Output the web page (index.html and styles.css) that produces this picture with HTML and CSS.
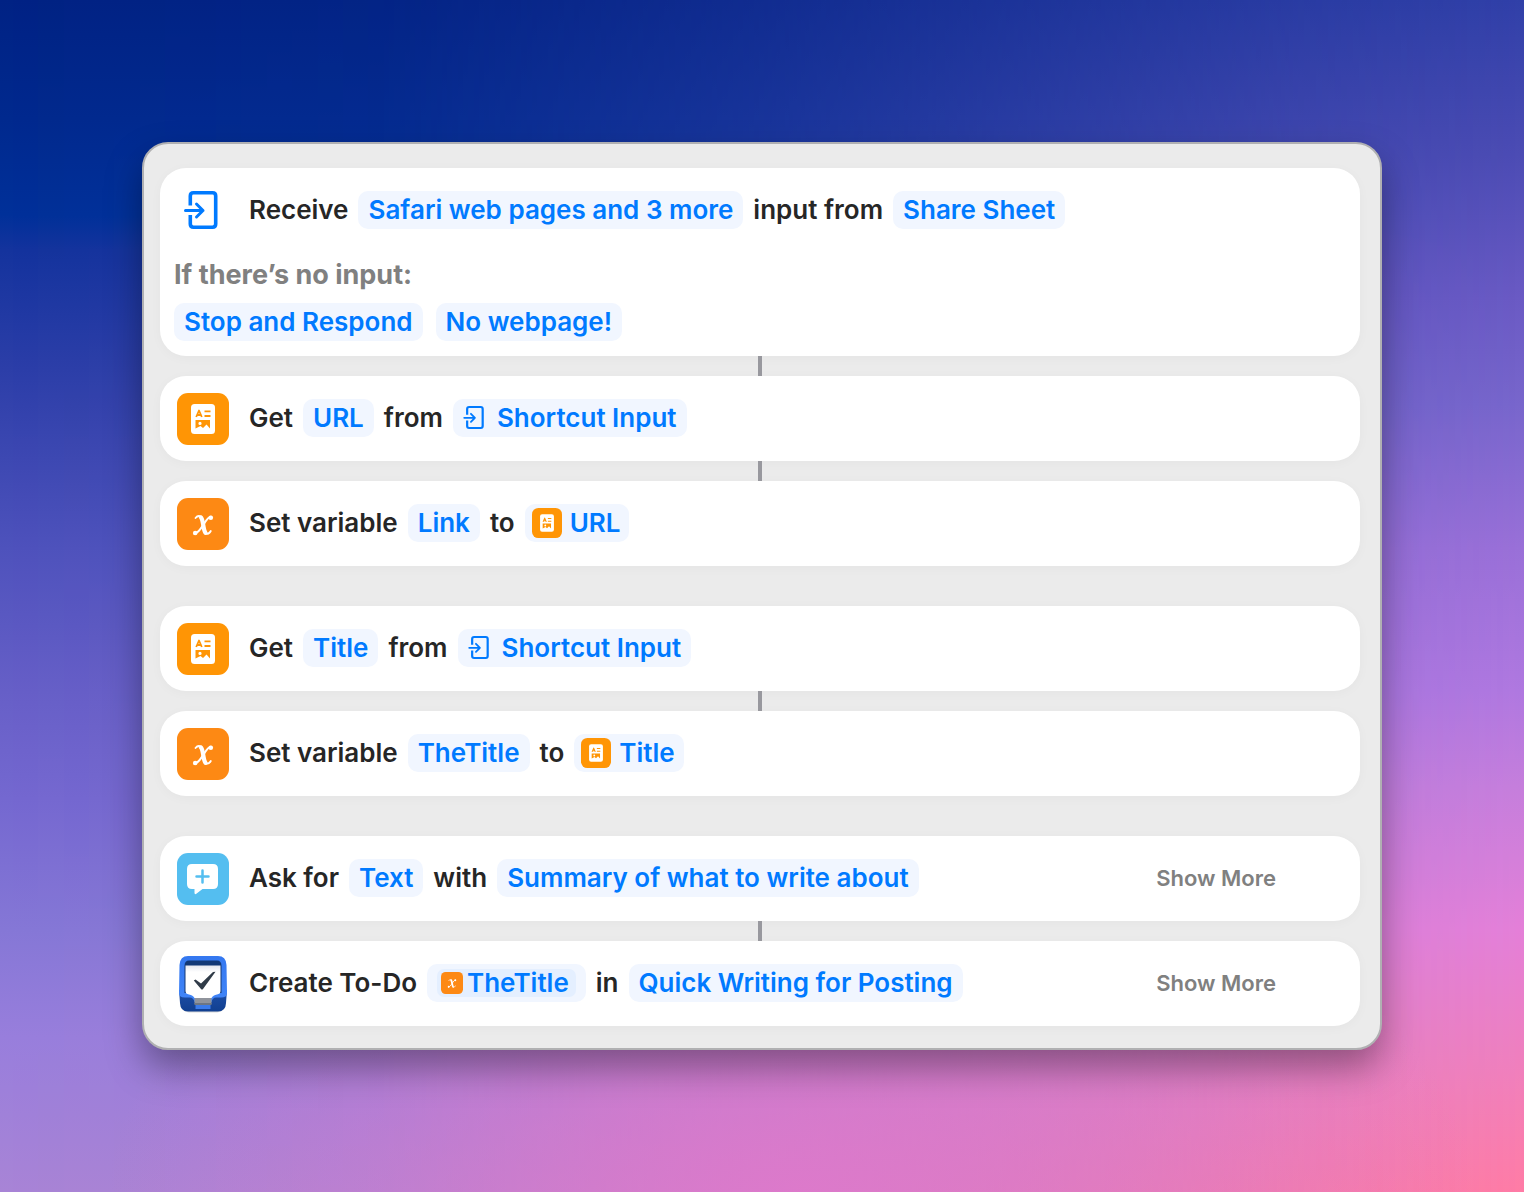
FILE: index.html
```html
<!DOCTYPE html>
<html lang="en">
<head>
<meta charset="utf-8">
<title>Shortcut editor</title>
<link rel="stylesheet" href="styles.css">
</head>
<body>
<svg class="defs" aria-hidden="true">
  <defs>
    <linearGradient id="g-tray" x2="0" y2="1"><stop stop-color="#3478f0"/><stop offset="1" stop-color="#4185f8"/></linearGradient>
    <linearGradient id="g-base" x2="0" y2="1"><stop stop-color="#1e4fa8"/><stop offset="1" stop-color="#113f90"/></linearGradient>
    <linearGradient id="g-page" x2="0" y2="1"><stop stop-color="#e4e6ee"/><stop offset=".2" stop-color="#fff"/></linearGradient>
  </defs>
  <symbol id="i-input" viewBox="0 0 36 40">
    <g fill="none" stroke="currentColor" stroke-linecap="round" stroke-linejoin="round">
      <path stroke-width="3.6" stroke-linecap="butt" d="M6.800 15.500V6Q6.800 2.800 10 2.800H29Q32.200 2.800 32.200 6V34Q32.200 37.200 29 37.200H10Q6.800 37.200 6.800 34V25"/>
      <path stroke-width="3" d="M2 20.500H19.500M13 14L19.500 20.500L13 27"/>
    </g>
  </symbol>
  <symbol id="i-doc" viewBox="0 0 52 52">
    <rect width="52" height="52" rx="11" fill="#ff9505"/>
    <rect x="14" y="11" width="24" height="30" rx="3.500" fill="#fff"/>
    <g fill="none" stroke="#ff9505" stroke-width="1.800">
      <path d="M19.200 24L22 17.500L24.800 24M20 22H24" stroke-linejoin="round"/>
      <path d="M27.500 18.300H33.500M27.500 23H33.500"/>
    </g>
    <path fill="#ff9505" fill-rule="evenodd" d="M18.500 27H33V35.500L29.500 31.500L26 35L23.500 33L18.500 35.500ZM23 28.800A1.600 1.600 0 1 0 23 32A1.600 1.600 0 1 0 23 28.800Z"/>
  </symbol>
  <symbol id="i-var" viewBox="0 0 52 52">
    <rect width="52" height="52" rx="11" fill="#fd8914"/>
    <g fill="none" stroke="#fff" stroke-linecap="round">
      <path stroke-width="4.200" d="M24 19.500C26.500 22 26 32 28.500 34.800"/>
      <path stroke-width="1.800" d="M18.500 20C20 18 22 17.500 24 18.500M28.500 35.800C31.500 36.500 33 34.500 33.800 33"/>
      <path stroke-width="2" d="M34 18.800C29 18 24 35.500 17.500 35.700"/>
    </g>
    <circle cx="33.800" cy="19.700" r="2.300" fill="#fff"/><circle cx="18.200" cy="35" r="2.300" fill="#fff"/>
  </symbol>
  <symbol id="i-ask" viewBox="0 0 52 52">
    <rect width="52" height="52" rx="11" fill="#54bef0"/>
    <path fill="#fff" d="M15 11H36Q41 11 41 16V31Q41 36 36 36H25.500L19 41Q17.500 41.500 17.500 40V36H15Q10 36 10 31V16Q10 11 15 11Z"/>
    <path d="M25.500 17.500V29.500M19.500 23.500H31.500" stroke="#54bef0" stroke-width="2.500" stroke-linecap="round"/>
  </symbol>
  <symbol id="i-todo" viewBox="0 0 52 60">
    <rect x="3" y="4" width="46" height="54.500" rx="9" fill="#000" opacity=".15"/>
    <path fill="url(#g-base)" d="M2 36H50L49 49Q48.500 57.500 41 57.500H11Q3.500 57.500 3 49Z"/>
    <path fill="url(#g-tray)" d="M11 2H41Q49 2 49.500 11L50 39Q50 43.500 44 43.500H39Q35.500 43.500 34.500 48H17.500Q16.500 43.500 13 43.500H8Q2 43.500 2 39L2.500 11Q3 2 11 2Z"/>
    <path fill="#123876" d="M12 6.500H40Q44.500 6.500 44.500 12V39H7.500V12Q7.500 6.500 12 6.500Z"/>
    <path fill="url(#g-page)" d="M8.500 11.500H43.500V37Q43.500 40 40 40.500Q36 41 34.500 44H17.500Q16 41 12 40.500Q8.500 40 8.500 37Z"/>
    <path fill="#90949c" d="M17.500 44H34.500V50H17.500Z"/>
    <path fill="#6d7684" d="M17.500 49H34.500V51H17.500Z"/>
    <path fill="#3b7bea" d="M18.500 51H33.500V55H18.500Z"/>
    <path fill="#303b48" d="M16.800 26.500L18.500 25.500L24 29.500L36 18L38.500 17.800L26 35Q25 36 24 35Z"/>
  </symbol>
</svg>
<main class="window">
  <section class="flow">
    <article class="card card-tall">
      <div class="row">
        <svg class="icon icon-input" aria-hidden="true"><use href="#i-input"/></svg>
        <div class="phrase">
          <span>Receive</span>
          <button type="button" class="pill">Safari web pages and 3 more</button>
          <span>input from</span>
          <button type="button" class="pill">Share Sheet</button>
        </div>
      </div>
      <h2 class="fallback">If there’s no input:</h2>
      <div class="choices">
        <button type="button" class="pill">Stop and Respond</button>
        <button type="button" class="pill">No webpage!</button>
      </div>
    </article>
    <article class="card">
      <svg class="icon" aria-hidden="true"><use href="#i-doc"/></svg>
      <div class="phrase">
        <span>Get</span>
        <button type="button" class="pill">URL</button>
        <span>from</span>
        <button type="button" class="pill"><svg class="glyph" aria-hidden="true"><use href="#i-input"/></svg>Shortcut Input</button>
      </div>
    </article>
    <article class="card">
      <svg class="icon" aria-hidden="true"><use href="#i-var"/></svg>
      <div class="phrase">
        <span>Set variable</span>
        <button type="button" class="pill">Link</button>
        <span>to</span>
        <button type="button" class="pill pill-doc"><svg class="tile" aria-hidden="true"><use href="#i-doc"/></svg>URL</button>
      </div>
    </article>
  </section>
  <section class="flow">
    <article class="card">
      <svg class="icon" aria-hidden="true"><use href="#i-doc"/></svg>
      <div class="phrase">
        <span>Get</span>
        <button type="button" class="pill">Title</button>
        <span>from</span>
        <button type="button" class="pill"><svg class="glyph" aria-hidden="true"><use href="#i-input"/></svg>Shortcut Input</button>
      </div>
    </article>
    <article class="card">
      <svg class="icon" aria-hidden="true"><use href="#i-var"/></svg>
      <div class="phrase">
        <span>Set variable</span>
        <button type="button" class="pill">TheTitle</button>
        <span>to</span>
        <button type="button" class="pill pill-doc"><svg class="tile" aria-hidden="true"><use href="#i-doc"/></svg>Title</button>
      </div>
    </article>
  </section>
  <section class="flow">
    <article class="card">
      <svg class="icon" aria-hidden="true"><use href="#i-ask"/></svg>
      <div class="phrase">
        <span>Ask for</span>
        <button type="button" class="pill">Text</button>
        <span>with</span>
        <button type="button" class="pill">Summary of what to write about</button>
      </div>
      <button type="button" class="more">Show More</button>
    </article>
    <article class="card">
      <svg class="icon icon-todo" aria-hidden="true"><use href="#i-todo"/></svg>
      <div class="phrase">
        <span>Create To-Do</span>
        <button type="button" class="pill"><span class="token"><svg class="mini" aria-hidden="true"><use href="#i-var"/></svg>TheTitle</span></button>
        <span>in</span>
        <button type="button" class="pill">Quick Writing for Posting</button>
      </div>
      <button type="button" class="more">Show More</button>
    </article>
  </section>
</main>
</body>
</html>
```
FILE: styles.css
```css
* { box-sizing: border-box; }
body {
  position: relative;
  margin: 0;
  min-height: 100vh;
  padding: 142px;
  font: 600 26px/38px Inter, "Liberation Sans", sans-serif;
  color: #262626;
  background: linear-gradient(to bottom, #002284 0%, #00298e 10%, #003099 18%, #14339d 21%, #2c3ea8 31%, #4e52bc 46%, #6860c8 59%, #7468d0 67%, #8577d6 78%, #987edc 87%, #a884d6 100%);
}
/* Wallpaper: the warm right-hand side, then the pink glow at the foot */
body::before,
body::after {
  content: "";
  position: absolute;
  inset: 0;
}
body::before {
  background: linear-gradient(to bottom, #3040a8 0%, #4c4cb4 13%, #6a5ac4 25%, #7866cc 34%, #9a70d8 46%, #b078e0 58%, #c67edc 66%, #e480d8 78%, #ee80c0 88%, #ff7ba5 100%);
  mask-image: linear-gradient(to right, transparent 0%, rgba(0, 0, 0, .06) 25%, rgba(0, 0, 0, .34) 50%, rgba(0, 0, 0, .85) 85%, #000 100%);
}
body::after {
  background: radial-gradient(ellipse 45% 30% at 52% 100%, rgba(224, 120, 204, .85), rgba(216, 122, 208, 0));
}
.defs { position: absolute; width: 0; height: 0; }
.window {
  position: relative;
  z-index: 1;
  display: grid;
  gap: 40px;
  padding: 24px 20px 22px 16px;
  border: 2px solid #b0b0b2;
  border-radius: 26px;
  background: #ebebeb;
  box-shadow: 0 18px 36px rgba(0, 0, 0, .36);
}
.flow { display: grid; gap: 20px; }
.card {
  position: relative;
  display: flex;
  align-items: center;
  gap: 20px;
  min-height: 85px;
  padding: 0 84px 2px 17px;
  border-radius: 26px;
  background: #fff;
  box-shadow: 0 2px 12px rgba(0, 0, 0, .03);
}
.card + .card::before {
  content: "";
  position: absolute;
  top: -20px;
  left: calc(50% - 2px);
  width: 4px;
  height: 20px;
  background: #98989e;
}
.card-tall {
  display: block;
  padding: 22px 14px 15px;
}
.row { display: flex; align-items: center; gap: 20px; padding-left: 3px; }
.icon { flex: none; width: 52px; height: 52px; margin-top: 2px; }
.icon-input { height: 40px; margin-top: 0; padding-right: 3px; color: #007aff; }
.icon-todo { height: 60px; }
.phrase { display: flex; align-items: center; gap: 10px; white-space: nowrap; }
button { font: inherit; border: 0; margin: 0; cursor: pointer; }
.pill {
  display: flex;
  align-items: center;
  height: 38px;
  padding: 0 10px;
  border-radius: 10px;
  background: #f1f6ff;
  color: #007aff;
  white-space: nowrap;
}
.fallback { margin: 26px 0 9px; font-size: 27px; font-weight: 700; line-height: 38px; color: #808080; }
.choices { display: flex; gap: 13px; }
.glyph { width: 22px; height: 25px; margin-right: 12px; }
.pill-doc { padding: 0 9px 0 7px; }
.tile { width: 30px; height: 30px; margin-right: 8px; }
.token {
  display: flex;
  align-items: center;
  height: 28px;
  padding: 0 7px 0 4px;
  border-radius: 7px;
  background: #e4efff;
}
.mini { width: 22px; height: 22px; margin-right: 4px; }
.more { margin-left: auto; padding: 0; background: none; color: #808080; font-size: 22px; }
```
